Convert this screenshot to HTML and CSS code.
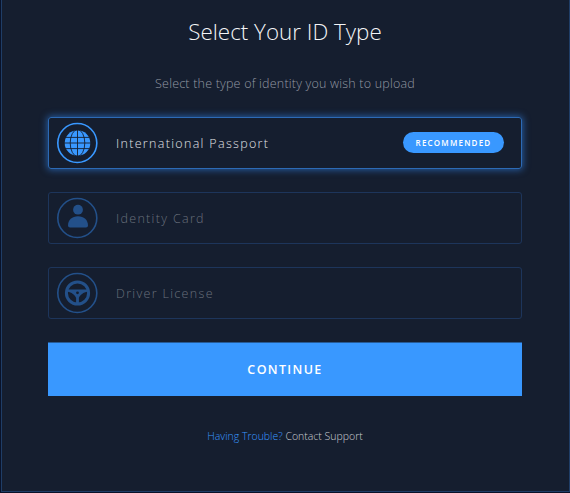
FILE: index.html
```html
<!DOCTYPE html>
<html lang="en">
<head>
<meta charset="utf-8">
<title>Select Your ID Type</title>
<link rel="stylesheet" href="styles.css">
</head>
<body>
<main class="panel">
  <h1 class="title">Select Your ID Type</h1>
  <p class="subtitle">Select the type of identity you wish to upload</p>
  <div class="options">
    <div class="option selected">
      <svg class="icon" viewBox="0 0 42 42">
        <circle class="ring" cx="21.3" cy="21" r="19.5"/>
        <circle class="solid" cx="21.5" cy="21" r="12.8"/>
        <g class="cut">
          <path d="M21.5 7v28M7 21h28M9 15.4h24M9 26.6h24"/>
          <ellipse cx="21.5" cy="21" rx="7.3" ry="13.4"/>
        </g>
      </svg>
      <span class="label">International Passport</span>
      <span class="badge">RECOMMENDED</span>
    </div>
    <div class="option">
      <svg class="icon" viewBox="0 0 42 42">
        <circle class="ring" cx="21.3" cy="21" r="19.5"/>
        <circle class="solid" cx="22" cy="12.7" r="4.9"/>
        <path class="solid" d="M12 28.4C12 23 16.1 19.3 22 19.3S32 23 32 28.4Q32 30.4 30 30.4H14Q12 30.4 12 28.4Z"/>
      </svg>
      <span class="label">Identity Card</span>
    </div>
    <div class="option">
      <svg class="icon" viewBox="0 0 42 42">
        <circle class="ring" cx="21.3" cy="21" r="19.5"/>
        <circle class="wheel" cx="21.5" cy="21" r="11.1"/>
        <path class="solid" d="M11.5 17.6H31.5V19.8C27.5 20.2 24 23 22.9 26V31.5H20.1V26C19 23 15.5 20.2 11.5 19.8Z"/>
        <circle class="hub" cx="21.5" cy="20.8" r="1.4"/>
      </svg>
      <span class="label">Driver License</span>
    </div>
  </div>
  <button class="continue">CONTINUE</button>
  <p class="help"><a class="trouble">Having Trouble?</a> Contact Support</p>
</main>
</body>
</html>
```
FILE: styles.css
```css
* { box-sizing: border-box; }
body {
  margin: 0;
  height: 493px;
  padding: 0 0 1px 1px;
  overflow: hidden;
  background: #091229;
  font-family: "Open Sans", sans-serif;
}
.panel {
  height: 492px;
  padding: 0 47px 0 46px;
  background: #151e2f;
  border: 1px solid #1f3d66;
  border-top: 0;
}
.title {
  margin: 0;
  padding-top: 16px;
  font-size: 22.4px;
  line-height: 32px;
  font-weight: 300;
  text-align: center;
  color: #f4f5f7;
}
.subtitle {
  margin: 26px 0 0;
  font-size: 12.5px;
  line-height: 20px;
  font-weight: 300;
  letter-spacing: 0.2px;
  text-align: center;
  color: #9398a2;
}
.options {
  display: grid;
  gap: 23px;
  margin-top: 23px;
}
.option {
  display: flex;
  align-items: center;
  height: 52px;
  padding: 0 17px 0 7px;
  border: 1px solid #1d355b;
  border-radius: 3px;
  color: #235089;
}
.selected {
  border-color: #2c6ab5;
  box-shadow: 0 0 7px 1px rgba(48, 125, 219, 0.65);
  color: #3998ff;
}
.icon {
  width: 42px;
  height: 42px;
  margin-top: -1px;
}
.ring, .wheel { fill: none; stroke: currentColor; stroke-width: 1.6; }
.wheel { stroke-width: 3; }
.solid { fill: currentColor; }
.cut { fill: none; stroke: #151e2f; stroke-width: 0.9; }
.hub { fill: #151e2f; }
.label {
  margin-left: 18px;
  font-size: 12.5px;
  font-weight: 300;
  letter-spacing: 1.32px;
  color: #69707c;
}
.selected .label { color: #e0e3e7; }
.badge {
  width: 101px;
  height: 21px;
  margin: -1px 0 0 auto;
  border-radius: 11px;
  background: #3998ff;
  color: #fff;
  font-size: 8px;
  line-height: 21px;
  font-weight: 600;
  letter-spacing: 1.2px;
  text-align: center;
}
.continue {
  display: block;
  width: 100%;
  height: 53px;
  margin-top: 24px;
  padding: 0;
  border: 0;
  background: #3998ff;
  box-shadow: 0 -0.5px 0 #3998ff;
  color: #fff;
  font: 600 12.5px "Open Sans", sans-serif;
  letter-spacing: 1.35px;
}
.help {
  margin: 30px 0 0;
  font-size: 10.5px;
  line-height: 20px;
  font-weight: 300;
  text-align: center;
  color: #c9ccd1;
}
.trouble { color: #3998ff; }
```
